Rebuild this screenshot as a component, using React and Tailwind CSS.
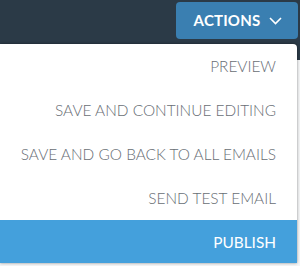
import React from "react";

export default function App() {
  const items = [
    "PREVIEW",
    "SAVE AND CONTINUE EDITING",
    "SAVE AND GO BACK TO ALL EMAILS",
    "SEND TEST EMAIL",
  ];
  return (
    <div
      className="relative w-[300px] h-[266px] overflow-hidden bg-[#f4f5f6]"
      style={{ fontFamily: "Lato, 'Noto Sans', sans-serif" }}
    >
      <div className="h-[60px] bg-[#2b3a47] flex justify-end items-start pt-[2px] pr-[2px]">
        <button className="w-[122px] h-[37px] rounded-[4px] bg-[#3a7fb1] text-white font-bold text-[15px] tracking-[0.2px] flex items-center justify-center gap-[9px] pl-[2px]">
          <span>ACTIONS</span>
          <svg width="13" height="8" viewBox="0 0 13 8" fill="none">
            <path d="M1 1 L6.5 6.5 L12 1" stroke="white" strokeWidth="1.6" />
          </svg>
        </button>
      </div>
      <div className="absolute left-0 top-[44px] w-[297px] bg-white rounded-tr-[4px] shadow-[0_0_3px_rgba(0,0,0,0.45)] overflow-hidden">
        {items.map((t) => (
          <div
            key={t}
            className="h-[44px] flex items-center justify-end pr-[21px] pt-[2px] text-[15.4px] font-light text-[#686e75]"
          >
            {t}
          </div>
        ))}
        <div className="h-[43px] flex items-center justify-end pr-[21px] pt-[2px] text-[15.4px] bg-[#44a0dc] text-white">
          PUBLISH
        </div>
      </div>
    </div>
  );
}
